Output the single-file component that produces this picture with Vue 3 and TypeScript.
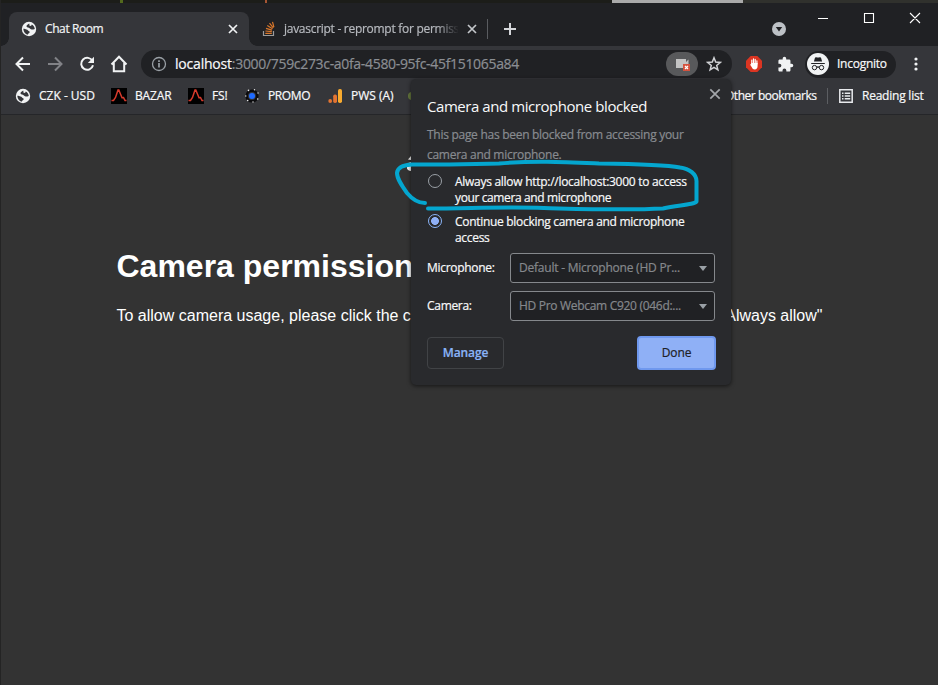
<script setup lang="ts">
import { ref } from 'vue'

interface Bookmark { label: string; icon: 'globe' | 'peak' | 'orbit' | 'bars'; cls: string }

const bookmarks: Bookmark[] = [
  { label: 'CZK - USD', icon: 'globe', cls: 'b-czk' },
  { label: 'BAZAR', icon: 'peak', cls: 'b-bazar' },
  { label: 'FS!', icon: 'peak', cls: 'b-fs' },
  { label: 'PROMO', icon: 'orbit', cls: 'b-promo' },
  { label: 'PWS (A)', icon: 'bars', cls: 'b-pws' },
]
const choice = ref<'allow' | 'block'>('block')
</script>

<template>
  <div class="window">
    <div class="backdrop"><i class="d1"></i><i class="d2"></i><i class="d3"></i><i class="d4"></i></div>

    <header class="tabs">
      <div class="tab active">
        <svg class="i16" viewBox="0 0 16 16"><circle cx="8" cy="8" r="7.200" fill="#f1f3f4" /><path d="M8.200 2.500C6.800 3.300 5 4.400 5.600 5.800c.5 1 2.200.5 3 1.400.9 1 2 1.300 3.700 1.200l1.500-.3c-.3-2.300-1.400-3.900-3-4.700l-.6 1.300-1.500.2zM2.300 7.800c1.300 0 2.200.6 3.200.7 1.400.2 1.300 1.400 2.500 1.700 1 .3.800 1.500-.1 2-.8.400-1 .9-1.200 1.500C4.300 13 2.500 11 2.300 7.800z" fill="#35363a" /></svg>
        <span class="t title1">Chat Room</span>
        <svg class="x" viewBox="0 0 10 10"><path d="M1 1l8 8M9 1L1 9" stroke="#f1f3f4" stroke-width="1.700" /></svg>
      </div>
      <div class="tab second">
        <svg class="i16" viewBox="0 0 16 16"><path d="M2.500 10v4.500h10V10" fill="none" stroke="#9b9b9b" stroke-width="1.200" /><path d="M4.300 12.400h6.500M4.400 10l6.400.7M5 7.400l6 1.700M6.300 4.600l5.200 3.200M8.500 2.200l3.800 4.700M11.500.8l1.400 5.400" stroke="#d9772b" stroke-width="1.200" /></svg>
        <span class="t title2">javascript - reprompt for permiss</span>
        <svg class="x" viewBox="0 0 10 10"><path d="M1 1l8 8M9 1L1 9" stroke="#c3c6ca" stroke-width="1.700" /></svg>
      </div>
      <i class="tab-sep"></i>
      <svg class="plus" viewBox="0 0 12 12"><path d="M6 0v12M0 6h12" stroke="#d5d7da" stroke-width="2" /></svg>
      <svg class="search-tabs" viewBox="0 0 14 14"><circle cx="7" cy="7" r="7" fill="#bdc1c6" /><path d="M3.800 5h6.400L7 9.500z" fill="#202124" /></svg>
      <svg class="winbtns" viewBox="0 0 104 12"><path d="M0 6.500h10M46.500 1.500h9v9h-9zM92 1l10 10M102 1L92 11" fill="none" stroke="#fff" stroke-width="1.100" /></svg>
    </header>

    <div class="toolbar">
      <svg class="nav back" viewBox="0 0 16 16"><path d="M15 8H2M8 1.500L1.500 8 8 14.500" fill="none" stroke="#f1f3f4" stroke-width="2" /></svg>
      <svg class="nav fwd" viewBox="0 0 16 16"><path d="M1 8h13M8 1.500L14.500 8 8 14.500" fill="none" stroke="#818286" stroke-width="2" /></svg>
      <svg class="nav reload" viewBox="0 0 16 16"><path d="M13.500 5A6 6 0 1 0 14 9.300" fill="none" stroke="#f1f3f4" stroke-width="2" /><path d="M15 .8V7H8.800z" fill="#f1f3f4" /></svg>
      <svg class="nav home" viewBox="0 0 18 18"><path d="M1.500 9.500L9 1.800l7.500 7.700M3.800 8v8.300h10.400V8" fill="none" stroke="#f1f3f4" stroke-width="2" /></svg>
      <div class="omnibox">
        <svg class="info" viewBox="0 0 16 16"><circle cx="8" cy="8" r="6.500" fill="none" stroke="#9aa0a6" stroke-width="1.300" /><path d="M8 7v4.500M8 4.200v1.700" stroke="#9aa0a6" stroke-width="1.700" /></svg>
        <span class="url"><b>localhost</b><span class="path">:3000/759c273c-a0fa-4580-95fc-45f151065a84</span></span>
        <span class="cam">
          <svg viewBox="0 0 16 14"><path d="M1 1h10v3l2.500-2.500V7H8v3H1z" fill="#c4c4c4" /><rect x="8" y="6" width="7" height="7" fill="#d5533f" /><path d="M10 8l3 3M13 8l-3 3" stroke="#fff" stroke-width="1.200" /></svg>
        </span>
        <svg class="star" viewBox="0 0 16 16"><path d="M8 1.800l1.700 4.300 4.600.3-3.600 3 1.200 4.500L8 11.400l-3.900 2.500 1.200-4.500-3.600-3 4.600-.3z" fill="none" stroke="#d0d2d5" stroke-width="1.500" /></svg>
      </div>
      <svg class="stop" viewBox="0 0 16 16"><path d="M4.700 0h6.600L16 4.700v6.600L11.300 16H4.700L0 11.300V4.700z" fill="#db3522" /><path d="M5.800 8.500V4M7.500 7.500V2.900M9.200 7.500V3.400M10.900 8V4.800" stroke="#fff" stroke-width="1.200" stroke-linecap="round" /><path d="M5.100 7h6.500v3c0 2-1.100 3.500-2.800 3.500-1.500 0-2.300-.8-3-2.200L4 8.600c.3-.6 1-.4 1.300.1z" fill="#fff" /></svg>
      <svg class="puzzle" viewBox="0 0 24 24"><path d="M20.500 11H19V7c0-1.100-.9-2-2-2h-4V3.500a2.500 2.500 0 0 0-5 0V5H4c-1.100 0-2 .9-2 2v3.800h1.500a2.700 2.700 0 0 1 0 5.400H2V20c0 1.100.9 2 2 2h3.800v-1.500a2.700 2.700 0 0 1 5.400 0V22H17c1.100 0 2-.9 2-2v-4h1.500a2.500 2.500 0 0 0 0-5z" fill="#f1f3f4" /></svg>
      <div class="incog">
        <svg viewBox="0 0 22 22"><circle cx="11" cy="11" r="11" fill="#f1f3f4" /><path d="M6.900 8.500l1-3.600c.2-.7.800-.9 1.400-.7.900.3 2.500.3 3.400 0 .6-.2 1.200 0 1.400.7l1 3.600z" fill="#202124" /><path d="M4.200 10.500h13.600M9.600 14.500c.7-.6 2.100-.6 2.800 0" stroke="#202124" stroke-width="1.100" fill="none" /><circle cx="7.500" cy="14.600" r="2.200" fill="none" stroke="#202124" stroke-width="1" /><circle cx="14.500" cy="14.600" r="2.200" fill="none" stroke="#202124" stroke-width="1" /></svg>
        <span class="t">Incognito</span>
      </div>
      <svg class="dots" viewBox="0 0 4 14"><circle cx="2" cy="2" r="1.600" fill="#f1f3f4" /><circle cx="2" cy="7" r="1.600" fill="#f1f3f4" /><circle cx="2" cy="12" r="1.600" fill="#f1f3f4" /></svg>
    </div>

    <nav class="bookmarks">
      <div v-for="b in bookmarks" :key="b.label" class="bm" :class="b.cls">
        <svg v-if="b.icon === 'globe'" class="i16" viewBox="0 0 16 16"><circle cx="8" cy="8" r="7.200" fill="#f1f3f4" /><path d="M8.200 2.500C6.800 3.300 5 4.400 5.600 5.800c.5 1 2.200.5 3 1.400.9 1 2 1.300 3.700 1.200l1.500-.3c-.3-2.300-1.400-3.900-3-4.700l-.6 1.300-1.500.2zM2.300 7.800c1.300 0 2.200.6 3.200.7 1.400.2 1.300 1.400 2.500 1.700 1 .3.800 1.500-.1 2-.8.400-1 .9-1.200 1.500C4.300 13 2.500 11 2.300 7.800z" fill="#35363a" /></svg>
        <svg v-else-if="b.icon === 'peak'" class="i16" viewBox="0 0 16 16"><rect width="16" height="16" fill="#000" /><path d="M.5 12.500h2L4.500 9.500 7 2h.8l3.200 7.700 1.500-.2 1.500 3h1.500" fill="none" stroke="#d63a2c" stroke-width="1.500" /></svg>
        <svg v-else-if="b.icon === 'orbit'" class="i16" viewBox="0 0 16 16"><circle cx="8" cy="8" r="5.300" fill="none" stroke="#0b0b0d" stroke-width="2.600" /><circle cx="8" cy="8" r="3" fill="#1f6bff" /><g fill="#e8e8e8"><circle cx="4.500" cy="2.400" r=".8" /><circle cx="10.500" cy="1.800" r=".7" /><circle cx="14" cy="5" r=".7" /><circle cx="13.700" cy="11" r=".8" /><circle cx="9" cy="14" r=".7" /><circle cx="3.700" cy="12.500" r=".8" /><circle cx="1.800" cy="8" r=".7" /></g></svg>
        <svg v-else class="i16" viewBox="0 0 16 16"><circle cx="3.200" cy="13" r="1.900" fill="#e37432" /><rect x="6.200" y="6.500" width="3.800" height="8.500" rx="1.700" fill="#e37432" /><rect x="11" y="1" width="4" height="14" rx="1.700" fill="#f9ab2f" /></svg>
        <span class="t">{{ b.label }}</span>
      </div>
      <i class="hint"></i>
      <span class="t other">Other bookmarks</span>
      <i class="bm-sep"></i>
      <svg class="list" viewBox="0 0 14 14"><path d="M.8.8h12.400v12.400H.8zM3 4.300h1.500M5.700 4.300H11.200M3 7h1.500M5.700 7h5.500M3 9.700h1.500M5.700 9.700h5.500" fill="none" stroke="#e8eaed" stroke-width="1.500" /></svg>
      <span class="t reading">Reading list</span>
    </nav>

    <main class="page">
      <svg class="peek" viewBox="0 0 8 18"><path d="M8 1L5 4.500 8 5zM8 7L4 8.500v5c.5 1.500 2 2.500 4 2.500z" fill="#f2f2f2" /></svg>
      <h1>Camera permission</h1>
      <p><span class="p1">To allow camera usage, please click the c</span><span class="p2">Always allow"</span></p>
    </main>

    <section class="popup">
      <div class="head">
        <h2>Camera and microphone blocked</h2>
        <svg viewBox="0 0 12 12"><path d="M1.300 1.300l9.400 9.400M10.700 1.300L1.300 10.700" stroke="#a3a6aa" stroke-width="1.700" /></svg>
      </div>
      <div class="desc"><div class="ds1">This page has been blocked from accessing your</div><div class="ds2">camera and microphone.</div></div>
      <div class="opt" @click="choice = 'allow'">
        <i class="radio" :class="{ on: choice === 'allow' }"></i>
        <div><div class="o1">Always allow http://localhost:3000 to access</div><div class="o2">your camera and microphone</div></div>
      </div>
      <div class="opt second-opt" @click="choice = 'block'">
        <i class="radio" :class="{ on: choice === 'block' }"></i>
        <div><div class="o3">Continue blocking camera and microphone</div><div class="o4">access</div></div>
      </div>
      <div class="field"><label class="l1">Microphone:</label><div class="select"><span class="s1">Default - Microphone (HD Pr...</span><i></i></div></div>
      <div class="field"><label class="l2">Camera:</label><div class="select"><span class="s2">HD Pro Webcam C920 (046d:...</span><i></i></div></div>
      <div class="actions"><button class="manage">Manage</button><button class="done">Done</button></div>
    </section>

    <svg class="ink" viewBox="0 0 310 56"><path d="M31 44C24 44 18 40 13 34C8 27 3 20 3 14C3.500 8 9 6 18 5.500C50 6 75 5 105 4.500C140 1.500 170 3 205 4.500C240 5 270 5.500 286 8.500C295 9.500 303 15 302.500 23V42.500C300 46 285 46 269 49.500C230 51.500 190 50 150 49C110 47.500 75 49.500 34 49.500" fill="none" stroke="#04a6cf" stroke-width="4" stroke-linecap="round" stroke-linejoin="round" /></svg>
  </div>
</template>

<style>
body { margin: 0; background: #333; overflow: hidden; }
</style>

<style scoped>
* { box-sizing: border-box; }
.window { position: relative; width: 938px; height: 685px; border-left: 1px solid #242424; background: #333; color: #f8f9fa; font-family: "Open Sans", "Noto Sans", sans-serif; font-size: 12px; overflow: hidden; display: flex; flex-direction: column; }
svg { display: block; flex: none; }
.t { white-space: nowrap; letter-spacing: -0.4px; line-height: 16px; }
.t, .popup, .url { -webkit-text-stroke: 0.2px currentColor; }
.i16 { width: 16px; height: 16px; }
.backdrop { height: 3px; flex: none; background: #1c1d19; display: flex; }
.backdrop i { height: 3px; }
.d1 { width: 3px; margin-left: 119px; background: #53691d; }
.d2 { width: 2px; margin-left: 142px; background: #a65534; }
.d3 { width: 131px; margin-left: 345px; background: #aaa; }
.d4 { flex: 1; background: #30312d; }
.tabs { height: 43px; flex: none; background: #202124; display: flex; align-items: flex-start; }
.tab { display: flex; align-items: center; height: 34px; margin-top: 9px; }
.active { width: 240px; margin-left: 8px; padding-left: 12px; background: #35363a; border-radius: 8px 8px 0 0; position: relative; }
.active::before, .active::after { content: ""; position: absolute; bottom: 0; width: 8px; height: 8px; }
.active::before { left: -8px; background: radial-gradient(circle at 0 0, #202124 7.5px, #35363a 8px); }
.active::after { right: -8px; background: radial-gradient(circle at 100% 0, #202124 7.5px, #35363a 8px); }
.x { width: 10px; height: 10px; }
.title1 { margin-left: 8px; width: 183px; color: #f1f3f4; }
.second { margin-left: 12px; }
.title2 { margin-left: 3px; padding-left: 4px; width: 178px; color: #b7babf; letter-spacing: -0.28px; -webkit-mask-image: linear-gradient(90deg, #000 156px, transparent 179px); mask-image: linear-gradient(90deg, #000 156px, transparent 179px); }
.second .x { margin-left: 9px; }
.tab-sep { width: 1px; height: 20px; background: #5a5c60; margin: 16px 0 0 10px; }
.plus { width: 12px; height: 12px; margin: 20px 0 0 16px; }
.search-tabs { width: 14px; height: 14px; margin: 19px 0 0 256px; }
.winbtns { width: 104px; height: 12px; margin: 9px 0 0 32px; }
.toolbar { height: 36px; flex: none; background: #35363a; display: flex; align-items: center; }
.nav { width: 16px; height: 16px; }
.back { margin-left: 14px; }
.fwd, .reload { margin-left: 16px; }
.home { width: 18px; height: 18px; margin-left: 15px; }
.omnibox { width: 591px; height: 28px; margin-left: 13px; border-radius: 14px; background: #202124; display: flex; align-items: center; padding-left: 10px; }
.info { width: 16px; height: 16px; }
.url { margin-left: 8px; width: 491px; white-space: nowrap; font-size: 14px; line-height: 20px; color: #8b8e93; letter-spacing: -0.32px; }
.url b { font-weight: 400; color: #f8f9fa; letter-spacing: -0.2px; }
.cam { width: 32px; height: 24px; border-radius: 12px; background: #58595b; display: flex; align-items: center; justify-content: center; }
.cam svg { width: 16px; height: 14px; margin: 2px 0 0 1px; }
.star { width: 16px; height: 16px; margin-left: 8px; }
.stop { width: 16px; height: 16px; margin-left: 14px; }
.puzzle { width: 17px; height: 17px; margin-left: 15px; }
.incog { width: 91px; height: 27px; margin-left: 11px; border-radius: 14px; background: #202124; display: flex; align-items: center; padding-left: 2px; }
.incog svg { width: 22px; height: 22px; }
.incog .t { margin-left: 8px; letter-spacing: -0.25px; }
.dots { width: 4px; height: 14px; margin-left: 18px; }
.bookmarks { height: 33px; flex: none; background: #35363a; border-bottom: 1px solid #252629; display: flex; align-items: center; padding: 0 0 4px 14px; }
.bm { display: flex; align-items: center; gap: 8px; height: 16px; flex: none; }
.b-czk { width: 96px; } .b-bazar { width: 77px; } .b-fs { width: 56px; } .b-promo { width: 83px; } .b-pws { width: 81px; }
.b-czk .t { letter-spacing: 0; }
.b-bazar .t, .b-fs .t { letter-spacing: -0.15px; }
.b-pws .t { letter-spacing: 0; }
.hint { width: 8px; height: 8px; border-radius: 50%; background: #66783d; margin-left: 0; }
.other { margin-left: 309px; width: 92px; letter-spacing: -0.47px; }
.bm-sep { width: 1px; height: 16px; margin-left: 10px; background: #5c5e62; }
.list { width: 14px; height: 14px; margin-left: 11px; }
.reading { margin-left: 9px; letter-spacing: -0.23px; }
.page { flex: 1; font-family: "Liberation Sans", Arial, sans-serif; color: #fff; padding-left: 116px; display: flex; flex-direction: column; }
.peek { width: 8px; height: 18px; margin: 40px 0 0 286px; }
h1 { margin: 73px 0 0 -0.5px; font-size: 32px; line-height: 40px; font-weight: 700; letter-spacing: 0; }
p { margin: 20px 0 0 -0.5px; width: 706px; font-size: 16px; line-height: 20px; display: flex; justify-content: space-between; white-space: nowrap; }
.popup { position: absolute; left: 410px; top: 79px; width: 320px; height: 306px; border-radius: 5px; background: #292a2d; box-shadow: 0 1px 4px rgba(0,0,0,.6); padding: 0 16px; white-space: nowrap; letter-spacing: -0.3px; }
.head { display: flex; justify-content: space-between; height: 46px; margin-right: -6px; }
.head svg { width: 12px; height: 12px; margin-top: 9px; margin-right: 0; }
h2 { margin: 16px 0 0; font-size: 15px; line-height: 22px; font-weight: 400; letter-spacing: -0.44px; -webkit-text-stroke-width: 0; }
.desc { color: #888b90; line-height: 20px; letter-spacing: -0.28px; }
.o1 { letter-spacing: -0.28px; }
.o2 { letter-spacing: -0.38px; }
.opt { display: flex; margin-top: 9px; line-height: 16px; height: 32px; }
.second-opt { margin-top: 8px; }
.radio { width: 14px; height: 14px; flex: none; margin: 0 13px 0 1px; border: 1.5px solid #9aa0a6; border-radius: 50%; }
.radio.on { border-color: #8ab4f8; background: radial-gradient(circle, #8fb0f6 3.6px, transparent 4.200px); }
.field { display: flex; align-items: center; justify-content: space-between; height: 30px; margin-top: 8px; }
.field label, .field span { margin-top: -1px; }
.second-opt + .field { margin-top: 7px; }
.select { width: 205px; height: 30px; border: 1px solid #85888c; border-radius: 3px; background: #202124; color: #85888c; display: flex; align-items: center; justify-content: space-between; padding: 0 7px 0 8px; }
.s1 { letter-spacing: -0.22px; }
.select i { border: 4px solid transparent; border-top: 5px solid #9aa0a6; border-bottom: 0; }
.actions { display: flex; justify-content: space-between; align-items: center; margin: 15px -1px 0 0; }
button { font: 600 12px "Open Sans", sans-serif; letter-spacing: -0.1px; padding: 0 0 1px; border-radius: 4px; }
.manage { width: 77px; height: 32px; border: 1px solid #414346; background: transparent; color: #8ab4f8; }
.done { width: 79px; height: 34px; border: 2px solid #6f98ee; background: #8fb0f6; color: #202124; font-weight: 400; -webkit-text-stroke: 0.2px; }
.ink { position: absolute; left: 393px; top: 159px; width: 310px; height: 56px; }
</style>
